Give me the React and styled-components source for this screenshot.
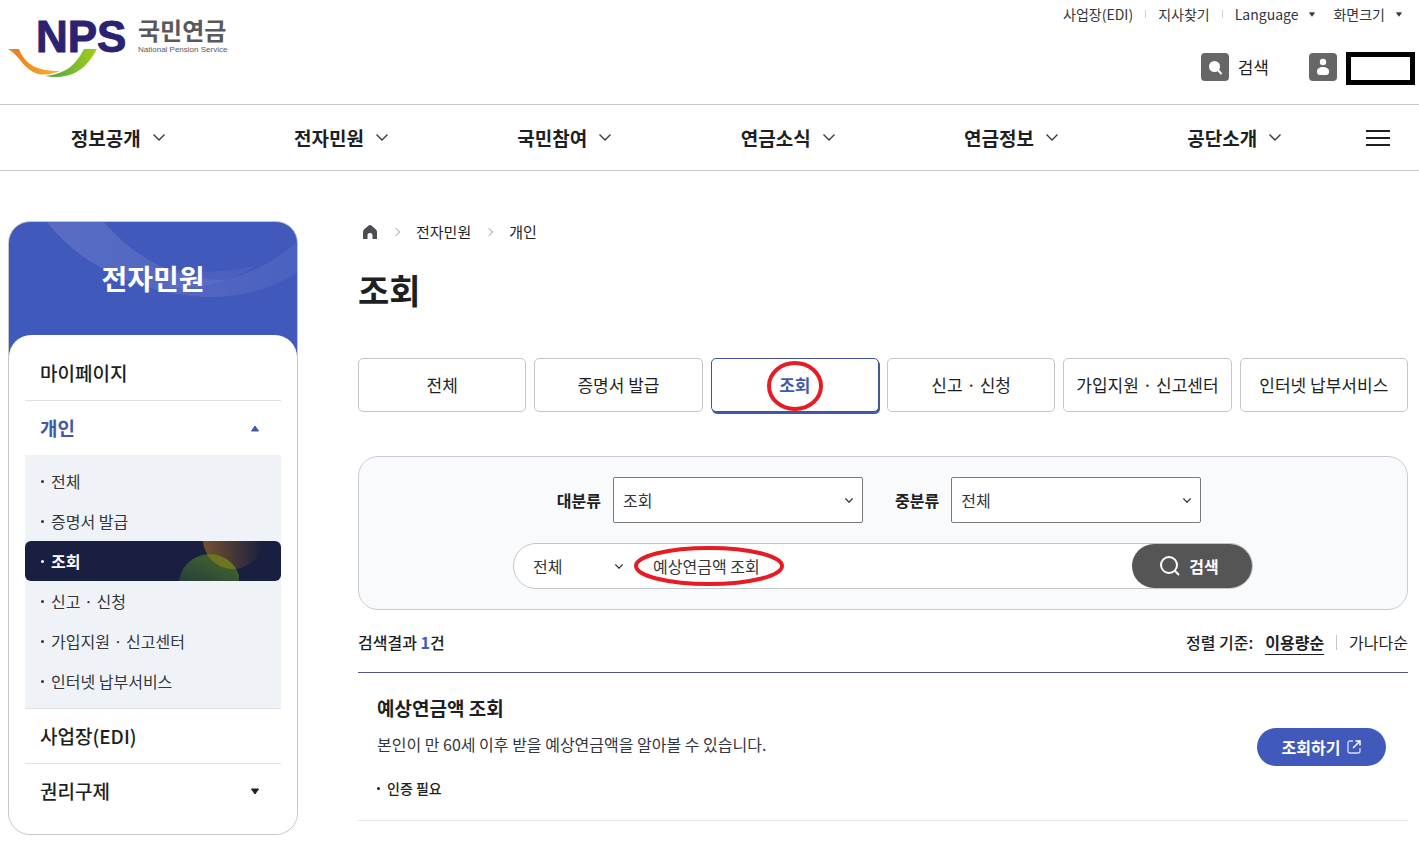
import React from "react";
import { Component } from "react";
import styled, { createGlobalStyle } from "styled-components";

const GlobalStyle = createGlobalStyle`
  * {
    box-sizing: border-box;
  }
  body {
    margin: 0;
    background: #ffffff;
    color: #1d1f23;
    font-family: "Noto Sans CJK KR", "Noto Sans", sans-serif;
    font-size: 16px;
    line-height: 24px;
  }
  button, input, select {
    margin: 0;
    padding: 0;
    border: none;
    background: none;
    color: inherit;
    font: inherit;
  }
  button {
    cursor: pointer;
  }
  a {
    color: inherit;
    text-decoration: none;
  }
  ul, ol {
    margin: 0;
    padding: 0;
    list-style: none;
  }
  svg {
    display: block;
    flex: none;
  }
`;

/* ===== Header ===== */
const HeaderTop = styled.header`
  display: flex;
  justify-content: space-between;
  border-bottom: 1px solid #c4c6ca;
`;

const LogoLink = styled.a`
  padding-left: 8px;
`;

const HeaderRight = styled.div`
  display: flex;
  flex-direction: column;
  align-items: flex-end;
  gap: 28px;
  padding: 4px 4px 19px 0;
`;

const UtilList = styled.ul`
  display: flex;
  align-items: center;
  padding-right: 13px;
  font-size: 14px;
  line-height: 20px;
  color: #33363b;
`;

const UtilItem = styled.li`
  display: flex;
  align-items: center;

  &:nth-child(-n + 2)::after {
    content: "";
    width: 1px;
    height: 8px;
    margin: 0 12px;
    background: #d0d2d6;
  }
  &:nth-child(3) {
    margin-right: 18px;
  }
`;

const UtilButton = styled.button`
  display: flex;
  align-items: center;
  gap: 11px;
`;

const MemberRow = styled.div`
  display: flex;
  align-items: flex-start;
  gap: 40px;
`;

const IconButton = styled.button`
  display: flex;
  align-items: flex-start;
  gap: 9px;
  font-size: 17px;
  line-height: 30px;

  > svg {
    margin-top: 1px;
  }
`;

const NameBox = styled.span`
  width: 69px;
  height: 33px;
  border: 5px solid #000000;
  background: #ffffff;
`;

const Nav = styled.nav`
  display: flex;
  align-items: center;
  gap: 20px;
  padding: 0 29px 0 6px;
  border-bottom: 1px solid #c4c6ca;
`;

const NavList = styled.ul`
  flex: 1;
  display: grid;
  grid-template-columns: repeat(6, 1fr);
`;

const NavButton = styled.button`
  display: flex;
  align-items: center;
  justify-content: center;
  gap: 12px;
  width: 100%;
  height: 65px;
  font-size: 19px;
  font-weight: 700;
`;

/* ===== Layout ===== */
const Body = styled.div`
  display: flex;
  align-items: flex-start;
  gap: 60px;
  padding: 50px 11px 0 8px;
`;

const Main = styled.main`
  flex: 1;
  min-width: 0;
`;

/* ===== Side menu ===== */
const Side = styled.aside`
  flex: none;
  width: 290px;
  border: 1px solid #c4c6ca;
  border-radius: 22px;
  background: linear-gradient(#4259bc 140px, #ffffff 140px);
  overflow: hidden;
`;

const SideTitle = styled.h2`
  display: grid;
  margin: 0;
  height: 113px;
  color: #ffffff;
  font-size: 28px;
  font-weight: 700;
  line-height: 113px;
  text-align: center;

  > * {
    grid-area: 1 / 1;
  }
`;

const SidePanel = styled.ul`
  padding: 11px 16px 16px;
  border-radius: 22px;
  background: #ffffff;
`;

const SideItem = styled.li`
  & + & {
    border-top: 1px solid #dfe1e5;
  }
`;

const SideButton = styled.button`
  display: flex;
  align-items: center;
  justify-content: space-between;
  width: 100%;
  height: 54px;
  padding: 0 22px 0 15px;
  font-size: 19px;
  font-weight: ${(props) => (props.$open ? "700" : "500")};
  color: ${(props) => (props.$open ? "#4259a8" : "#1d1f23")};
`;

const SubList = styled.ul`
  padding: 6px 0 7px;
  background: #eff3f8;
`;

const SubLink = styled.a`
  display: flex;
  align-items: center;
  justify-content: space-between;
  height: 40px;
  padding-left: 16px;
  border-radius: 6px;
  overflow: hidden;
  color: ${(props) => (props.$active ? "#ffffff" : "#33363b")};
  background: ${(props) => (props.$active ? "#191f40" : "transparent")};
  font-weight: ${(props) => (props.$active ? "700" : "400")};
`;

const Bullet = styled.span`
  display: flex;
  align-items: center;
  gap: 7px;

  &::before {
    content: "";
    width: 3px;
    height: 3px;
    border-radius: 50%;
    background: currentColor;
  }
`;

/* ===== Content ===== */
const Breadcrumb = styled.ol`
  display: flex;
  align-items: center;
  height: 22px;
  padding-left: 4px;
  font-size: 15px;
  line-height: 22px;

  li {
    display: flex;
    align-items: center;
  }
  li + li::before {
    content: "";
    width: 5px;
    height: 5px;
    margin: 0 17px 0 15px;
    border: solid #b5b8bd;
    border-width: 1px 1px 0 0;
    transform: rotate(45deg);
  }
`;

const PageTitle = styled.h1`
  margin: 22px 0 43px;
  font-size: 34px;
  font-weight: 700;
  line-height: 50px;
`;

const TabList = styled.ul`
  display: grid;
  grid-template-columns: repeat(6, 1fr);
  gap: 8px;
`;

const TabButton = styled.button`
  position: relative;
  width: 100%;
  height: 54px;
  border: 1px solid ${(props) => (props.$active ? "#3f5390" : "#c4c6ca")};
  border-radius: 5px;
  box-shadow: ${(props) => (props.$active ? "1px 2px 0 #4259a8" : "none")};
  background: #ffffff;
  font-size: 17px;
  font-weight: ${(props) => (props.$active ? "700" : "400")};
  color: ${(props) => (props.$active ? "#4259a8" : "#1d1f23")};
  white-space: nowrap;
`;

const Filter = styled.form`
  display: flex;
  flex-direction: column;
  align-items: center;
  gap: 20px;
  margin: 44px 0 20px;
  padding: 20px;
  border: 1px solid #c9ccd5;
  border-radius: 20px;
  background: #f9fafc;
`;

const FilterRow = styled.div`
  display: flex;
  gap: 32px;
  padding-right: 8px;
`;

const FilterLabel = styled.label`
  display: flex;
  align-items: center;
  gap: 12px;
  font-weight: 700;
`;

const SelectWrap = styled.span`
  display: grid;
  align-items: center;
  font-weight: 400;

  > * {
    grid-area: 1 / 1;
  }
  > svg {
    justify-self: end;
    margin-right: 10px;
    pointer-events: none;
  }
`;

const Select = styled.select`
  appearance: none;
  width: ${(props) => props.$width};
  height: ${(props) => (props.$plain ? "44px" : "46px")};
  padding: 0 10px;
  padding-left: ${(props) => (props.$plain ? "19px" : "9px")};
  border: ${(props) => (props.$plain ? "none" : "1px solid #76797e")};
  border-radius: 2px;
  background: ${(props) => (props.$plain ? "transparent" : "#ffffff")};
  color: #33363b;
`;

const SearchBar = styled.div`
  display: flex;
  width: 100%;
  max-width: 740px;
  border: 1px solid #c4c6ca;
  border-radius: 23px;
  background: #ffffff;
`;

const SearchField = styled.div`
  position: relative;
  flex: 1;
`;

const SearchInput = styled.input.attrs({
  type: "text",
})`
  width: 100%;
  height: 44px;
  padding-left: 20px;
  color: #33363b;
`;

const SearchButton = styled.button`
  display: flex;
  align-items: center;
  justify-content: center;
  gap: 8px;
  width: 120px;
  height: 44px;
  padding-right: 6px;
  border-radius: 22px;
  background: #555555;
  color: #ffffff;
  font-weight: 700;
`;

/* hand drawn highlight that lies over a control */
const Mark = styled.svg`
  position: absolute;
  top: 50%;
  left: ${(props) => props.$left};
  transform: ${(props) => props.$shift};
  pointer-events: none;
`;

const ResultHead = styled.div`
  display: flex;
  align-items: center;
  justify-content: space-between;
  padding-bottom: 18px;
  border-bottom: 1px solid #55597f;
`;

const Count = styled.p`
  margin: 0;
  font-weight: 500;

  em {
    color: #4259bc;
    font-style: normal;
    font-weight: 700;
  }
`;

const Sort = styled.div`
  display: flex;
  align-items: center;
  gap: 12px;
  font-weight: 500;
`;

const SortButton = styled.button`
  height: 24px;
  font-weight: ${(props) => (props.$active ? "700" : "400")};
  box-shadow: ${(props) => (props.$active ? "0 1px 0 #1d1f23" : "none")};
`;

const SortLine = styled.span`
  width: 1px;
  height: 15px;
  background: #c4c6ca;
`;

const Result = styled.li`
  display: flex;
  align-items: center;
  justify-content: space-between;
  padding: 21px 22px 20px 19px;
  border-bottom: 1px solid #e3e5e8;
`;

const ResultTitle = styled.h3`
  margin: 0 0 10px;
  font-size: 19px;
  font-weight: 700;
  line-height: 28px;
`;

const ResultText = styled.p`
  margin: 0 0 20px;
  color: #33363b;
`;

const ResultTag = styled(Bullet)`
  font-size: 14px;
  font-weight: 500;
  color: #1d1f23;
`;

const GoButton = styled.button`
  display: flex;
  align-items: center;
  justify-content: center;
  gap: 7px;
  width: 129px;
  height: 38px;
  border-radius: 19px;
  background: #4259bc;
  color: #ffffff;
  font-weight: 700;
`;

/* ===== Icons ===== */
const Logo = () => (
  <svg
    width="232"
    height="80"
    viewBox="0 -19 232 80"
    role="img"
    aria-label="NPS 국민연금"
  >
    <defs>
      <linearGradient id="orange" x1="0" x2="1">
        <stop offset="0" stopColor="#ea7a1c" />
        <stop offset="1" stopColor="#f7b52a" />
      </linearGradient>
      <linearGradient id="green" x1="0" x2="1">
        <stop offset="0" stopColor="#4aa347" />
        <stop offset="1" stopColor="#a5cf16" />
      </linearGradient>
    </defs>
    <path
      d="M0 30 H11 C17 45 28 52 52 52 C43 56 33 57 25 53 C14 47 9 34 0 30 Z"
      fill="url(#orange)"
    />
    <path
      d="M76 30 H89 C80 46 68 62 37 57 C57 55 67 47 76 30 Z"
      fill="url(#green)"
    />
    <text
      x="28"
      y="33"
      fill="#2c2370"
      stroke="#2c2370"
      strokeWidth="1"
      fontFamily="Liberation Sans, Arial, sans-serif"
      fontWeight="700"
      fontSize="44"
    >
      NPS
    </text>
    <text
      x="130"
      y="21"
      fill="#58595b"
      fontFamily="Noto Sans CJK KR, sans-serif"
      fontWeight="700"
      fontSize="24"
    >
      국민연금
    </text>
    <text
      x="130"
      y="33"
      fill="#58595b"
      fontFamily="Liberation Sans, Arial, sans-serif"
      fontWeight="400"
      fontSize="8"
    >
      National Pension Service
    </text>
  </svg>
);

const Chevron = ({ width, height, stroke }) => (
  <svg
    width={width}
    height={height}
    viewBox="0 0 12 7"
    fill="none"
    stroke="#33363b"
    strokeWidth={stroke}
  >
    <path d="M0.5 0.5 L6 6 L11.5 0.5" />
  </svg>
);

const Triangle = ({ size, up }) => (
  <svg
    width={size}
    height={size - 1}
    viewBox="0 0 8 7"
    fill="currentColor"
    stroke="currentColor"
    strokeLinejoin="round"
  >
    <path d={up ? "M4 1 L7.5 6 H0.5 Z" : "M4 6 L7.5 1 H0.5 Z"} />
  </svg>
);

const SearchSquare = () => (
  <svg width="28" height="28">
    <rect width="28" height="28" rx="4" fill="#666666" />
    <circle cx="13.5" cy="13.5" r="5.5" fill="#ffffff" />
    <path
      d="M17.5 17.5 L20 20.5"
      stroke="#ffffff"
      strokeWidth="2"
      strokeLinecap="round"
    />
  </svg>
);

const UserSquare = () => (
  <svg width="28" height="28">
    <rect width="28" height="28" rx="4" fill="#666666" />
    <circle cx="14" cy="9" r="3.2" fill="#ffffff" />
    <path
      d="M8 18.5 C8 15.5 10.5 14 14 14 C17.5 14 20 15.5 20 18.5 C20 21 19 22 17 22 H11 C9 22 8 21 8 18.5 Z"
      fill="#ffffff"
    />
  </svg>
);

const Burger = () => (
  <svg width="24" height="18" stroke="#1d1f23" strokeWidth="2">
    <path d="M0 2 H24 M0 9 H24 M0 16 H24" />
  </svg>
);

const Home = () => (
  <svg width="16" height="16" fill="#4b4d52">
    <path d="M8 1 Q9 1 10 2 L14 5.5 Q15 6.5 15 8 V15 H10.5 V11 Q10.5 9 8 9 Q5.5 9 5.5 11 V15 H1 V8 Q1 6.5 2 5.5 L6 2 Q7 1 8 1 Z" />
  </svg>
);

const Magnifier = () => (
  <svg width="22" height="22" fill="none" stroke="#ffffff" strokeWidth="2">
    <circle cx="10" cy="10" r="8" />
    <path d="M16 16 L20 20" />
  </svg>
);

const External = () => (
  <svg width="14" height="14" fill="none" stroke="#d5dbf3">
    <path
      strokeWidth="1.3"
      d="M6 1 H3 Q1 1 1 3 V11 Q1 13 3 13 H11 Q13 13 13 11 V8"
    />
    <path strokeWidth="1.5" stroke="#ffffff" d="M8.5 1 H13 V5.5 M13 1 L6 8" />
  </svg>
);

const BannerArcs = () => (
  <svg width="288" height="113">
    <defs>
      <linearGradient id="arc" x1="0" x2="1">
        <stop offset="0" stopColor="#ffffff" stopOpacity="0.12" />
        <stop offset="1" stopColor="#ffffff" stopOpacity="0.05" />
      </linearGradient>
    </defs>
    <path
      d="M38 0 C75 48 140 74 200 75 C240 75 268 64 288 50 V20 C262 42 240 52 215 58 C165 58 125 35 95 0 Z"
      fill="url(#arc)"
    />
    <path
      d="M160 46 C190 52 220 50 246 44 C220 60 190 68 160 66 Z"
      fill="#ffffff"
      fillOpacity="0.05"
    />
  </svg>
);

const ActiveCircles = () => (
  <svg width="102" height="40">
    <defs>
      <linearGradient id="leaf" x1="0" x2="1" y1="1" y2="0">
        <stop offset="0" stopColor="#24403c" />
        <stop offset="1" stopColor="#4b6b2c" />
      </linearGradient>
      <linearGradient id="sun" x1="0" x2="1">
        <stop offset="0" stopColor="#75502f" />
        <stop offset="1" stopColor="#191f40" />
      </linearGradient>
      <clipPath id="sunClip">
        <circle cx="54" cy="-2" r="30" />
      </clipPath>
    </defs>
    <circle cx="54" cy="-2" r="30" fill="url(#sun)" />
    <path d="M0 40 A31 31 0 0 1 60 34 V40 Z" fill="url(#leaf)" />
    <path
      d="M0 40 A31 31 0 0 1 60 34 V40 Z"
      fill="#6f7420"
      clipPath="url(#sunClip)"
    />
  </svg>
);

const NAV = ["정보공개", "전자민원", "국민참여", "연금소식", "연금정보", "공단소개"];

const CATEGORIES = [
  "전체",
  "증명서 발급",
  "조회",
  "신고 · 신청",
  "가입지원 · 신고센터",
  "인터넷 납부서비스",
];

class App extends Component {
  constructor(props) {
    super(props);
    this.state = {
      category: "조회",
      sort: "이용량순",
      keyword: "예상연금액 조회",
    };
  }

  handleChange = (e) => {
    this.setState({
      [e.target.id]: e.target.value,
    });
  };

  render() {
    const { category, sort, keyword } = this.state;
    return (
      <div>
        <GlobalStyle />

        {/* ===== Header ===== */}
        <HeaderTop>
          <LogoLink href="#">
            <Logo />
          </LogoLink>
          <HeaderRight>
            <UtilList>
              <UtilItem>
                <a href="#">사업장(EDI)</a>
              </UtilItem>
              <UtilItem>
                <a href="#">지사찾기</a>
              </UtilItem>
              <UtilItem>
                <UtilButton>
                  Language <Triangle size={6} />
                </UtilButton>
              </UtilItem>
              <UtilItem>
                <UtilButton>
                  화면크기 <Triangle size={6} />
                </UtilButton>
              </UtilItem>
            </UtilList>
            <MemberRow>
              <IconButton>
                <SearchSquare />
                검색
              </IconButton>
              <IconButton aria-label="회원">
                <UserSquare />
                <NameBox />
              </IconButton>
            </MemberRow>
          </HeaderRight>
        </HeaderTop>

        <Nav>
          <NavList>
            {NAV.map((name) => (
              <li key={name}>
                <NavButton>
                  {name}
                  <Chevron width={12} height={7} stroke={1.3} />
                </NavButton>
              </li>
            ))}
          </NavList>
          <button aria-label="전체메뉴">
            <Burger />
          </button>
        </Nav>

        <Body>
          {/* ===== Side menu ===== */}
          <Side>
            <SideTitle>
              <BannerArcs />
              <span>전자민원</span>
            </SideTitle>
            <SidePanel>
              <SideItem>
                <SideButton>마이페이지</SideButton>
              </SideItem>
              <SideItem>
                <SideButton $open>
                  개인 <Triangle size={8} up />
                </SideButton>
                <SubList>
                  {CATEGORIES.map((name) => (
                    <li key={name}>
                      <SubLink href="#" $active={name === category}>
                        <Bullet>{name}</Bullet>
                        {name === category && <ActiveCircles />}
                      </SubLink>
                    </li>
                  ))}
                </SubList>
              </SideItem>
              <SideItem>
                <SideButton>사업장(EDI)</SideButton>
              </SideItem>
              <SideItem>
                <SideButton>
                  권리구제 <Triangle size={8} />
                </SideButton>
              </SideItem>
            </SidePanel>
          </Side>

          {/* ===== Content ===== */}
          <Main>
            <Breadcrumb>
              <li>
                <a href="#" aria-label="홈">
                  <Home />
                </a>
              </li>
              <li>
                <a href="#">전자민원</a>
              </li>
              <li>
                <a href="#">개인</a>
              </li>
            </Breadcrumb>
            <PageTitle>조회</PageTitle>

            <TabList>
              {CATEGORIES.map((name) => (
                <li key={name}>
                  <TabButton
                    $active={name === category}
                    onClick={() => this.setState({ category: name })}
                  >
                    {name}
                    {name === "조회" && (
                      <Mark
                        width="58"
                        height="52"
                        $left="50%"
                        $shift="translate(-50%, -50%)"
                      >
                        <ellipse
                          cx="29"
                          cy="27"
                          rx="26"
                          ry="23"
                          fill="none"
                          stroke="#e51c24"
                          strokeWidth="4"
                        />
                      </Mark>
                    )}
                  </TabButton>
                </li>
              ))}
            </TabList>

            <Filter onSubmit={(e) => e.preventDefault()}>
              <FilterRow>
                <FilterLabel>
                  대분류
                  <SelectWrap>
                    <Select $width="250px">
                      <option>조회</option>
                    </Select>
                    <Chevron width={8} height={5} stroke={2} />
                  </SelectWrap>
                </FilterLabel>
                <FilterLabel>
                  중분류
                  <SelectWrap>
                    <Select $width="250px">
                      <option>전체</option>
                    </Select>
                    <Chevron width={8} height={5} stroke={2} />
                  </SelectWrap>
                </FilterLabel>
              </FilterRow>
              <SearchBar>
                <SelectWrap>
                  <Select $plain $width="119px" aria-label="검색 구분">
                    <option>전체</option>
                  </Select>
                  <Chevron width={8} height={5} stroke={2} />
                </SelectWrap>
                <SearchField>
                  <SearchInput
                    id="keyword"
                    aria-label="검색어"
                    value={keyword}
                    onChange={this.handleChange}
                  />
                  <Mark
                    width="152"
                    height="42"
                    $left="0"
                    $shift="translateY(-50%)"
                  >
                    <ellipse
                      cx="76"
                      cy="21"
                      rx="73"
                      ry="18"
                      fill="none"
                      stroke="#e51c24"
                      strokeWidth="4"
                    />
                  </Mark>
                </SearchField>
                <SearchButton>
                  <Magnifier />
                  검색
                </SearchButton>
              </SearchBar>
            </Filter>

            <ResultHead>
              <Count>
                검색결과 <em>1</em>건
              </Count>
              <Sort>
                <span>정렬 기준:</span>
                <SortButton
                  $active={sort === "이용량순"}
                  onClick={() => this.setState({ sort: "이용량순" })}
                >
                  이용량순
                </SortButton>
                <SortLine />
                <SortButton
                  $active={sort === "가나다순"}
                  onClick={() => this.setState({ sort: "가나다순" })}
                >
                  가나다순
                </SortButton>
              </Sort>
            </ResultHead>

            <ul>
              <Result>
                <div>
                  <ResultTitle>예상연금액 조회</ResultTitle>
                  <ResultText>
                    본인이 만 60세 이후 받을 예상연금액을 알아볼 수 있습니다.
                  </ResultText>
                  <ResultTag>인증 필요</ResultTag>
                </div>
                <GoButton>
                  조회하기
                  <External />
                </GoButton>
              </Result>
            </ul>
          </Main>
        </Body>
      </div>
    );
  }
}

export default App;
